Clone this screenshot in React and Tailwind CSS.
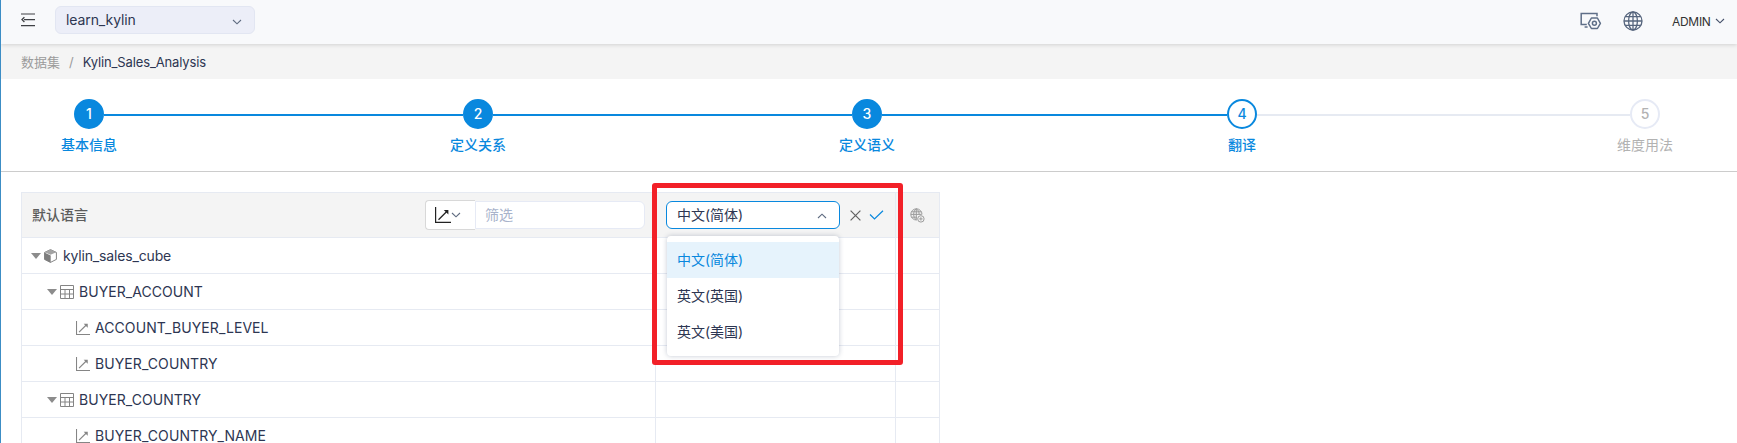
const steps = [
  { label: '基本信息', state: 'done', line: 'w-[359px] bg-[#0988de]' },
  { label: '定义关系', state: 'done', line: 'w-[359px] bg-[#0988de]' },
  { label: '定义语义', state: 'done', line: 'w-[345px] bg-[#0988de]' },
  { label: '翻译', state: 'current', line: 'w-[373px] bg-[#e6eaf2]' },
  { label: '维度用法', state: 'todo', line: null },
];

const circleStyles = {
  done: 'border-[#0988de] bg-[#0988de] text-white',
  current: 'border-[#0988de] bg-white text-[#0988de]',
  todo: 'border-[#e6eaf5] bg-white text-[#b2b2b2]',
};

const labelStyles = {
  done: 'font-medium text-[#0988de]',
  current: 'font-medium text-[#0988de]',
  todo: 'text-[#b2b2b2]',
};

const rows = [
  { name: 'kylin_sales_cube', type: 'cube' },
  { name: 'BUYER_ACCOUNT', type: 'table' },
  { name: 'ACCOUNT_BUYER_LEVEL', type: 'dimension' },
  { name: 'BUYER_COUNTRY', type: 'dimension' },
  { name: 'BUYER_COUNTRY', type: 'table' },
  { name: 'BUYER_COUNTRY_NAME', type: 'dimension' },
];

const indents = { cube: 'pl-[9px]', table: 'pl-[25px]', dimension: 'pl-[54px]' };

const nameStyles = {
  cube: 'ml-[3px] tracking-[-0.16px]',
  table: 'ml-[2px] tracking-[0.05px]',
  dimension: 'ml-[2px] tracking-[0.08px]',
};

const languages = ['中文(简体)', '英文(英国)', '英文(美国)'];

function Chevron({ up = false, className = '' }) {
  return (
    <svg className={className} width="10" height="6" viewBox="0 0 10 6" fill="none" stroke="currentColor" strokeWidth="1.1">
      <path d={up ? 'M1 5 5 1.2 9 5' : 'M1 1 5 4.8 9 1'} />
    </svg>
  );
}

function MenuIcon() {
  return (
    <svg width="14" height="14" viewBox="0 0 14 14" fill="none" stroke="#3f4145" strokeWidth="1.1">
      <path d="M0 1h14M3 6.600h11M0 12.600h14" />
      <path d="M3.400 4.200 1 6.600l2.400 2.400" strokeWidth="1.300" />
    </svg>
  );
}

function MonitorIcon() {
  return (
    <svg width="22" height="18" viewBox="0 0 22 18" fill="none" stroke="#5f6f88" strokeWidth="1.500">
      <path d="M17 4.200V1.500H1.200v11h5.600M4.600 15h3" />
      <path d="M11.400 6h6l3 5.300-3 5.200h-6l-3-5.200z" strokeLinejoin="round" />
      <circle cx="14.400" cy="11.300" r="2" />
    </svg>
  );
}

function GlobeIcon() {
  return (
    <svg width="20" height="20" viewBox="0 0 20 20" fill="none" stroke="#56657d" strokeWidth="1.300">
      <circle cx="10" cy="10" r="9" />
      <ellipse cx="10" cy="10" rx="4.400" ry="9" />
      <path d="M10 1v18M2.200 5.600h15.600M1 10h18M2.200 14.400h15.600" />
    </svg>
  );
}

function AddLanguageIcon() {
  return (
    <svg width="15" height="15" viewBox="0 0 15 15" fill="none" stroke="#9b9b9b" strokeWidth="1">
      <path d="M6.500 12A5.600 5.600 0 1 1 12 6.300M6.300 12C2.800 9.500 2.800 3 6.300.8M6.300.8C8.600 2.200 9.200 4.200 9.100 6.500M6.300.8v11M1.300 3.800h10M.8 6.400h11M1.300 9.200h5.500" />
      <circle cx="10.900" cy="10.900" r="3.200" />
      <path d="M9.200 10.900h3.400M10.900 9.200v3.400" />
    </svg>
  );
}

function DimensionIcon({ className }) {
  return (
    <svg className={className} viewBox="0 0 16 16" fill="none" stroke="currentColor">
      <path d="M.6 0v15.400H16" strokeWidth="1.200" />
      <path d="m3.500 12.800 8.500-8.500" strokeWidth="1.300" />
      <path d="M8.800 3h4.600v4.600z" fill="currentColor" stroke="none" />
    </svg>
  );
}

function TableIcon() {
  return (
    <svg width="14" height="14" viewBox="0 0 14 14" fill="none" stroke="#848484">
      <path d="M.5.5h13v13H.5zM.5 4.500h13M.5 9h13M5 4.500v9M9.500 4.500v9" />
    </svg>
  );
}

function CubeIcon() {
  return (
    <svg width="13" height="14" viewBox="0 0 13 14">
      <path d="M6.500.6 12.400 3.400v7L6.500 13.400.6 10.400v-7z" fill="white" stroke="#858585" />
      <path d="M.4 3.600 6.700 6.500v7.300L.4 10.600z" fill="#7d7d7d" />
      <path d="M6.500.5 12.300 3.300 6.500 5.700.8 3.300z" fill="#a3a3a3" />
    </svg>
  );
}

function Caret() {
  return (
    <svg width="10" height="6" viewBox="0 0 10 6" fill="#8c8c8c">
      <path d="M0 0h10L5 6z" />
    </svg>
  );
}

function Header() {
  return (
    <header className="relative z-10 flex h-11 items-start bg-[#f8f9fb] pl-5 pr-[12px] shadow-[0_1px_4px_rgba(0,0,0,0.14)]">
      <div className="mt-[13px]"><MenuIcon /></div>
      <div className="ml-5 mt-[6px] flex h-7 w-[200px] items-center justify-between rounded-md border border-[#e2e6f2] bg-[#eceef8] pl-[10px] pr-[12px] text-sm text-[#2d3652]">
        <span className="tracking-[-0.1px]">learn_kylin</span>
        <Chevron className="mt-[3px] text-[#5f6b80]" />
      </div>
      <div className="ml-auto flex">
        <div className="mt-[12px]"><MonitorIcon /></div>
        <div className="ml-[21px] mt-[11px]"><GlobeIcon /></div>
        <div className="ml-[29px] flex h-11 w-[53px] items-center justify-between text-xs text-[#333]">
          <span className="tracking-[-0.3px]">ADMIN</span>
          <Chevron className="mb-[2px] text-[#44506a]" />
        </div>
      </div>
    </header>
  );
}

function Stepper() {
  return (
    <section className="h-[93px] border-b border-[#ccc] pt-5">
      <div className="flex items-center pl-[73px]">
        {steps.map((step, i) => (
          <div key={step.label} className="flex items-center">
            <div className={`flex size-[30px] items-center justify-center rounded-full border-2 text-sm font-medium ${circleStyles[step.state]}`}>
              {i + 1}
            </div>
            {step.line && <div className={`mt-[2px] h-[2px] ${step.line}`} />}
          </div>
        ))}
      </div>
      <div className="mt-[5px] grid grid-cols-[389px_389px_389px_389px_56px] pl-[60px] text-sm leading-[22px]">
        {steps.map((step) => (
          <span key={step.label} className={labelStyles[step.state]}>{step.label}</span>
        ))}
      </div>
    </section>
  );
}

function LanguageSelect() {
  return (
    <div className="relative">
      <div className="flex h-7 w-[174px] items-center justify-between rounded-md border border-[#0988de] bg-white pl-[10px] pr-[12px] text-[#2d3652]">
        <span>中文(简体)</span>
        <Chevron up className="mt-[2px] text-[#5f6b80]" />
      </div>
      <ul className="absolute left-[1px] top-[35px] z-20 h-[120px] w-[172px] rounded bg-white pt-[6px] shadow-[0_0_5px_rgba(60,75,110,0.3)]">
        {languages.map((language, i) => (
          <li key={language} className={`flex h-9 items-center pl-[10px] ${i === 0 ? 'bg-[#e6f3fc] text-[#0988de]' : 'text-[#2d3652]'}`}>
            {language}
          </li>
        ))}
      </ul>
    </div>
  );
}

function TableHeader() {
  return (
    <div className="grid h-[45px] grid-cols-[634px_240px_44px] border-b border-[#e6eaf2] bg-[#f4f4f4] text-sm">
      <div className="flex items-center border-r border-[#e6eaf2] pl-[10px] pr-[10px]">
        <span className="font-medium text-[#5c5c5c]">默认语言</span>
        <div className="ml-auto flex h-[30px] w-[50px] items-center rounded-l-sm border border-r-0 border-[#d8d8d8] bg-white pl-[9px] text-[#222]">
          <DimensionIcon className="size-4" />
          <Chevron className="text-[#5f6b80]" />
        </div>
        <div className="flex h-7 w-[170px] items-center rounded-r-md border border-[#e6eaf5] bg-white pl-[9px] text-[#a8b3cb]">筛选</div>
      </div>
      <div className="flex items-center border-r border-[#e6eaf2] pl-[10px]">
        <LanguageSelect />
        <svg className="ml-[10px]" width="11" height="11" viewBox="0 0 11 11" fill="none" stroke="#626262" strokeWidth="1.200">
          <path d="m.6.6 9.800 9.800M10.400.6.6 10.400" />
        </svg>
        <svg className="ml-[8px]" width="15" height="10" viewBox="0 0 15 10" fill="none" stroke="#0988de" strokeWidth="1.200">
          <path d="m1 4.500 4.500 4.500L14 .7" />
        </svg>
      </div>
      <div className="flex items-center border-r border-[#e6eaf2] pl-[14px]"><AddLanguageIcon /></div>
    </div>
  );
}

function TableRow({ row }) {
  return (
    <div className="grid h-9 grid-cols-[634px_240px_44px] border-b border-[#e6eaf2] text-sm text-[#2d3652]">
      <div className={`flex items-center gap-[3px] border-r border-[#e6eaf2] ${indents[row.type]}`}>
        {row.type !== 'dimension' && <Caret />}
        {row.type === 'cube' && <CubeIcon />}
        {row.type === 'table' && <TableIcon />}
        {row.type === 'dimension' && <DimensionIcon className="size-[14px] text-[#858585]" />}
        <span className={nameStyles[row.type]}>{row.name}</span>
      </div>
      <div className="border-r border-[#e6eaf2]" />
      <div className="border-r border-[#e6eaf2]" />
    </div>
  );
}

export default function App() {
  return (
    <div className="relative h-[443px] w-[1737px] overflow-hidden border-l border-[#3c8dc5] bg-white font-['Inter','Noto_Sans_CJK_SC',sans-serif]">
      <Header />
      <nav className="flex h-[35px] items-center bg-[#f4f4f4] pl-5 pt-[2px] text-[13px]">
        <span className="text-[#9b9b9b]">数据集</span>
        <span className="mx-[9px] text-[#9b9b9b]">/</span>
        <span className="tracking-[-0.14px] text-[#2d3652]">Kylin_Sales_Analysis</span>
      </nav>
      <Stepper />
      <main className="ml-5 mt-5 w-[919px] border-l border-t border-[#e6eaf2]">
        <TableHeader />
        {rows.map((row, i) => <TableRow key={i} row={row} />)}
      </main>
      <div className="absolute left-[651px] top-[183px] z-30 h-[182px] w-[251px] rounded-[3px] border-[5px] border-[#f22028]" />
    </div>
  );
}
